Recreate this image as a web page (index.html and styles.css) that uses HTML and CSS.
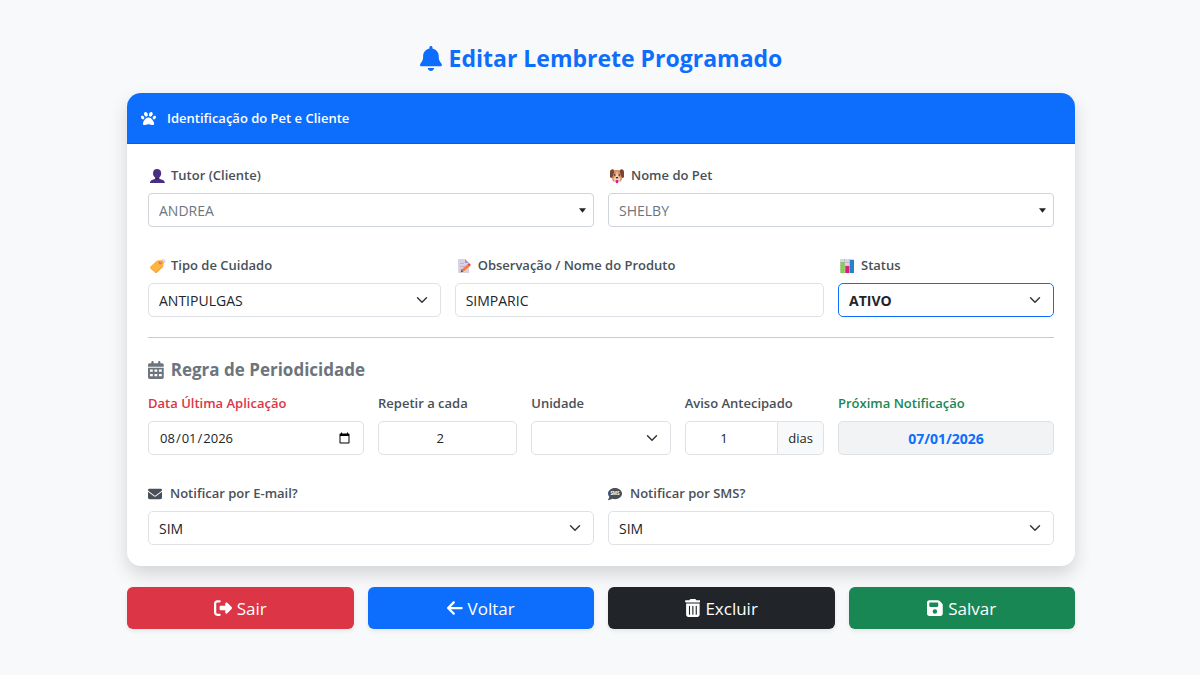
FILE: index.html
```html
<!DOCTYPE html>
<html lang="pt-BR">
<head>
    <meta charset="UTF-8">
    <meta name="viewport" content="width=device-width, initial-scale=1.0">
    <title>Editar Lembrete Programado</title>
    <link rel="stylesheet" href="styles.css">
</head>
<body>
    <main class="container">
        <h1 class="titulo">
            <svg class="icon" viewBox="0 0 448 512" aria-hidden="true"><path d="M224 0c-17.7 0-32 14.3-32 32V51.2C119 66 64 130.6 64 208v18.8c0 47-17.3 92.4-48.5 127.6l-7.4 8.3c-8.4 9.4-10.4 22.9-5.3 34.4S19.4 416 32 416H416c12.6 0 24-7.4 29.2-18.9s3.1-25-5.3-34.4l-7.4-8.3C401.3 319.2 384 273.9 384 226.8V208c0-77.4-55-142-128-156.8V32c0-17.7-14.3-32-32-32zm45.3 493.3c12-12 18.7-28.3 18.7-45.3H224 160c0 17 6.7 33.3 18.7 45.3s28.3 18.7 45.3 18.7s33.3-6.7 45.3-18.7z"/></svg>
            Editar Lembrete Programado
        </h1>

        <form id="form-lembrete">
            <div class="card">
                <div class="card-header">
                    <svg class="icon" viewBox="0 0 512 512" aria-hidden="true"><path d="M226.5 92.9c14.3 42.9-.3 86.2-32.6 96.8s-70.1-15.6-84.4-58.5s.3-86.2 32.6-96.8s70.1 15.6 84.4 58.5zM100.4 198.6c18.9 32.4 14.3 70.1-10.2 84.1s-59.7-.9-78.5-33.3S-2.7 179.3 21.8 165.3s59.7 .9 78.5 33.3zM69.2 401.2C121.6 259.9 214.7 224 256 224s134.4 35.9 186.8 177.2c3.6 9.7 5.2 20.1 5.2 30.5v1.6c0 25.8-20.9 46.7-46.7 46.7c-11.5 0-22.9-1.4-34-4.2l-88-22c-15.3-3.8-31.3-3.8-46.6 0l-88 22c-11.1 2.8-22.5 4.2-34 4.2C84.9 480 64 459.1 64 433.3v-1.6c0-10.4 1.6-20.8 5.2-30.5zM421.8 282.7c-24.5-14-29.1-51.7-10.2-84.1s54-47.3 78.5-33.3s29.1 51.7 10.2 84.1s-54 47.3-78.5 33.3zM310.1 189.7c-32.3-10.6-46.9-53.9-32.6-96.8s52.1-69.1 84.4-58.5s46.9 53.9 32.6 96.8s-52.1 69.1-84.4 58.5z"/></svg>
                    Identificação do Pet e Cliente
                </div>

                <div class="card-body">
                    <div class="row">
                        <div class="col-6">
                            <label class="form-label" for="tutor">
                                <svg class="emoji" viewBox="0 0 18 16" aria-hidden="true"><path fill="#4b2d83" d="M9 1c2.800 0 4.200 1.800 4.200 4.200 0 1.900-.8 3.500-2 4.300v1.300l3.600 1.100c1.300.5 2 1.500 2 3.100H2c0-1.600.6-2.600 2-3.100l3.200-1.100V9.500c-1.400-.8-2.200-2.400-2.200-4.300C5 2.800 6.300 1 9 1z"/><path fill="#35205f" d="M7.200 9.500c1.200.8 2.700.8 4 0v1.300c-1 .9-2.800.9-4 0z"/></svg>
                                Tutor (Cliente)
                            </label>
                            <select id="tutor" class="form-select busca">
                                <option>ANDREA</option>
                            </select>
                        </div>
                        <div class="col-6">
                            <label class="form-label" for="pet">
                                <svg class="emoji" viewBox="0 0 18 16" aria-hidden="true"><path fill="#d6956b" d="M5 2h8l2 6-2 5.500H5L3 8z"/><path fill="#7d4533" d="M5.500 1.500C3.500 1 2 2 2 4v4.500c0 1.500 1.500 2 2.500.5L6.300 4zM12.500 1.500c2-.5 3.500.5 3.500 2.500v4.500c0 1.500-1.500 2-2.500.5L11.700 4z"/><path fill="#f2d3b6" d="M9 3l1.200 5 2.300 2.500-1 3h-5l-1-3L7.800 8z"/><circle cx="6.600" cy="7" r=".8" fill="#3c2420"/><circle cx="11.400" cy="7" r=".8" fill="#3c2420"/><path fill="#3c2420" d="M7.500 9h3L9 11z"/><path fill="#e0208b" d="M7.700 12h2.600v2a1.300 1.300 0 0 1-2.600 0z"/></svg>
                                Nome do Pet
                            </label>
                            <select id="pet" class="form-select busca">
                                <option>SHELBY</option>
                            </select>
                        </div>
                    </div>

                    <div class="row">
                        <div class="col-4">
                            <label class="form-label" for="tipo">
                                <svg class="emoji" viewBox="0 0 18 16" aria-hidden="true"><path fill="#fdb63c" d="M9 2.500l5.500-.5 1.500 2-.8 4.500-6.500 6a1 1 0 0 1-1.400 0L2.400 10a1 1 0 0 1 0-1.400z"/><path fill="#f59a32" d="M2.200 9.500l5.200 4.700 7.800-6.500-.2 1.300-6.500 5.700a1 1 0 0 1-1.300 0L2.400 10.500z"/><circle cx="12.300" cy="4.800" r="1.700" fill="#ec6a77"/><path fill="none" stroke="#c9c4d6" d="M12.300 4.500c.7-3.300 4.700-3.500 4.700-1.300 0 1-1 2-2.300 2.200"/></svg>
                                Tipo de Cuidado
                            </label>
                            <select id="tipo" class="form-select">
                                <option>ANTIPULGAS</option>
                            </select>
                        </div>
                        <div class="col-5">
                            <label class="form-label" for="produto">
                                <svg class="emoji" viewBox="0 0 18 16" aria-hidden="true"><path fill="#d9d2e3" d="M3 1h7l4 4v10H3z"/><path fill="#a79bb8" d="M10 1l4 4h-4z"/><path stroke="#bdb4ca" d="M5 5.500h4M5 8.500h5M5 11.500h2"/><path fill="#fb7a36" d="M6.500 11.500l6-5 2 2-6 5z"/><path fill="#ef3f58" d="M12.500 6.500l1-1c1-.6 2.600 1 2 2l-1 1z"/><path fill="#6d4d50" d="M6.500 11.500L5.600 14.200l2.900-.7z"/></svg>
                                Observação / Nome do Produto
                            </label>
                            <input type="text" id="produto" class="form-control" value="SIMPARIC">
                        </div>
                        <div class="col-3">
                            <label class="form-label" for="status">
                                <svg class="emoji" viewBox="0 0 18 16" aria-hidden="true"><path fill="#dcd3e6" d="M2 1h14v14H2z"/><path stroke="#b5a9c4" stroke-width=".6" d="M2 4.500h14M2 8h14M2 11.500h14M6.500 1v14M11.500 1v14"/><path fill="#84cf4b" d="M2.500 4h4v11h-4z"/><path fill="#d8226f" d="M7.300 8h4v7h-4z"/><path fill="#2384c9" d="M12 2h4v13h-4z"/></svg>
                                Status
                            </label>
                            <select id="status" class="form-select status">
                                <option>ATIVO</option>
                            </select>
                        </div>
                    </div>

                    <hr>

                    <h2 class="subtitulo">
                        <svg class="icon" viewBox="0 0 448 512" aria-hidden="true"><path fill-rule="evenodd" d="M128 0c17.700 0 32 14.300 32 32V64H288V32c0-17.700 14.300-32 32-32s32 14.300 32 32V64h48c26.500 0 48 21.500 48 48v48H0V112C0 85.500 21.500 64 48 64H96V32c0-17.700 14.300-32 32-32zM0 192H448V464c0 26.500-21.500 48-48 48H48c-26.500 0-48-21.500-48-48zM56 240v64h80v-64zm128 0v64h80v-64zm128 0v64h80v-64zM56 368v64h80v-64zm128 0v64h80v-64zm128 0v64h80v-64z"/></svg>
                        Regra de Periodicidade
                    </h2>

                    <div class="row">
                        <div class="col-3">
                            <label class="form-label text-danger" for="ultima">Data Última Aplicação</label>
                            <input type="date" id="ultima" class="form-control" value="2026-08-01">
                        </div>
                        <div class="col-2">
                            <label class="form-label" for="repetir">Repetir a cada</label>
                            <input type="number" id="repetir" class="form-control text-center" value="2">
                        </div>
                        <div class="col-2">
                            <label class="form-label" for="unidade">Unidade</label>
                            <select id="unidade" class="form-select">
                                <option value=""></option>
                            </select>
                        </div>
                        <div class="col-2">
                            <label class="form-label" for="aviso">Aviso Antecipado</label>
                            <div class="input-group">
                                <input type="number" id="aviso" class="form-control text-center" value="1">
                                <span class="input-group-text">dias</span>
                            </div>
                        </div>
                        <div class="col-3">
                            <label class="form-label text-success" for="proxima">Próxima Notificação</label>
                            <input type="text" id="proxima" class="form-control text-center proxima" value="07/01/2026" readonly>
                        </div>
                    </div>

                    <div class="row">
                        <div class="col-6">
                            <label class="form-label com-icone" for="email">
                                <svg class="icon" viewBox="0 0 512 512" aria-hidden="true"><path d="M48 64C21.500 64 0 85.500 0 112c0 15.100 7.100 29.300 19.200 38.400L236.800 313.600c11.400 8.500 27 8.500 38.400 0L492.800 150.400c12.100-9.100 19.200-23.300 19.200-38.400c0-26.500-21.500-48-48-48H48zM0 176V384c0 35.300 28.700 64 64 64H448c35.300 0 64-28.700 64-64V176L294.400 339.200c-22.800 17.100-54 17.100-76.800 0L0 176z"/></svg>
                                Notificar por E-mail?
                            </label>
                            <select id="email" class="form-select">
                                <option>SIM</option>
                                <option>NÃO</option>
                            </select>
                        </div>
                        <div class="col-6">
                            <label class="form-label com-icone" for="sms">
                                <svg class="icon" viewBox="0 0 512 512" aria-hidden="true"><path d="M256 448c141.400 0 256-93.100 256-208S397.400 32 256 32S0 125.100 0 240c0 45.100 17.700 86.800 47.700 120.900c-1.900 24.500-11.400 46.300-21.400 62.900c-5.500 9.200-11.100 16.600-15.200 21.600c-6 7.300-11.100 12.200-11.100 18.600c0 9 7 16 16 16c28.700 0 57.600-8.900 81.600-19.300c22.900-10 42.400-21.900 54.300-30.600c31.800 11.500 67 17.900 104.100 17.900z"/><text class="sms-texto" x="256" y="298" text-anchor="middle">SMS</text></svg>
                                Notificar por SMS?
                            </label>
                            <select id="sms" class="form-select">
                                <option>SIM</option>
                                <option>NÃO</option>
                            </select>
                        </div>
                    </div>
                </div>
            </div>

            <div class="acoes">
                <button type="button" class="btn btn-danger">
                    <svg class="icon" viewBox="0 0 512 512" aria-hidden="true"><path d="M377.900 105.900L500.700 228.700c7.200 7.200 11.300 17.100 11.300 27.300s-4.100 20.100-11.300 27.300L377.900 406.100c-6.400 6.400-15 9.900-24 9.900c-18.700 0-33.900-15.200-33.900-33.900l0-62.100-128 0c-17.700 0-32-14.300-32-32l0-64c0-17.700 14.300-32 32-32l128 0 0-62.100c0-18.700 15.200-33.900 33.900-33.900c9 0 17.600 3.600 24 9.900zM160 96L96 96c-17.700 0-32 14.300-32 32l0 256c0 17.700 14.300 32 32 32l64 0c17.700 0 32 14.300 32 32s-14.300 32-32 32l-64 0c-53 0-96-43-96-96L0 128C0 75 43 32 96 32l64 0c17.700 0 32 14.300 32 32s-14.300 32-32 32z"/></svg>
                    Sair
                </button>
                <button type="button" class="btn btn-primary">
                    <svg class="icon" viewBox="0 0 448 512" aria-hidden="true"><path d="M9.400 233.400c-12.500 12.500-12.500 32.800 0 45.300l160 160c12.500 12.500 32.800 12.500 45.300 0s12.500-32.800 0-45.300L109.200 288 416 288c17.700 0 32-14.300 32-32s-14.300-32-32-32l-306.700 0L214.600 118.600c12.500-12.500 12.500-32.800 0-45.300s-32.800-12.500-45.300 0l-160 160z"/></svg>
                    Voltar
                </button>
                <button type="button" class="btn btn-dark">
                    <svg class="icon" viewBox="0 0 448 512" aria-hidden="true"><path fill-rule="evenodd" d="M135.200 17.700C140.600 6.800 151.700 0 163.800 0H284.200c12.100 0 23.200 6.800 28.600 17.700L320 32h96c17.700 0 32 14.300 32 32s-14.300 32-32 32H32C14.300 96 0 81.700 0 64S14.300 32 32 32h96zM32 128H416V448c0 35.300-28.700 64-64 64H96c-35.300 0-64-28.700-64-64zM128 192c-8.800 0-16 7.200-16 16V432c0 8.800 7.200 16 16 16s16-7.200 16-16V208c0-8.800-7.200-16-16-16zm96 0c-8.800 0-16 7.200-16 16V432c0 8.800 7.200 16 16 16s16-7.200 16-16V208c0-8.800-7.200-16-16-16zm96 0c-8.800 0-16 7.200-16 16V432c0 8.800 7.200 16 16 16s16-7.200 16-16V208c0-8.800-7.200-16-16-16z"/></svg>
                    Excluir
                </button>
                <button type="submit" class="btn btn-success">
                    <svg class="icon" viewBox="0 0 448 512" aria-hidden="true"><path fill-rule="evenodd" d="M64 32C28.700 32 0 60.700 0 96V416c0 35.300 28.700 64 64 64H384c35.300 0 64-28.700 64-64V173.300c0-17-6.700-33.300-18.700-45.300L352 50.700C340 38.700 323.700 32 306.700 32H64zm0 96c0-17.700 14.300-32 32-32H288c17.700 0 32 14.300 32 32v64c0 17.700-14.300 32-32 32H96c-17.700 0-32-14.300-32-32V128zM224 288a64 64 0 1 1 0 128 64 64 0 1 1 0-128z"/></svg>
                    Salvar
                </button>
            </div>
        </form>
    </main>
</body>
</html>
```

FILE: styles.css
```css
* {
    box-sizing: border-box;
}
body {
    margin: 0;
    background: #f8f9fa;
    color: #212529;
    font-family: "Segoe UI", "Open Sans", "Noto Sans", sans-serif;
    font-size: 14px;
    line-height: 21px;
}
.container {
    max-width: 976px;
    margin: 0 auto;
    padding: 43px 13px 43px 15px;
}
.icon {
    flex: none;
    height: 14px;
    fill: currentColor;
}

/* Títulos */
.titulo {
    display: flex;
    justify-content: center;
    align-items: center;
    gap: 7px;
    margin: 0 0 20px;
    color: #0d6efd;
    font-size: 23px;
    font-weight: 700;
    line-height: 30px;
}
.titulo .icon {
    height: 25px;
}
.subtitulo {
    display: flex;
    align-items: center;
    gap: 7px;
    margin: 0 0 11px;
    color: #6c757d;
    font-size: 17px;
    font-weight: 700;
    line-height: 24px;
}
.subtitulo .icon {
    height: 18px;
}

/* Card */
.card {
    overflow: hidden;
    background: #fff;
    border-radius: 14px;
    box-shadow: 0 8px 18px rgba(0,0,0,0.15);
}
.card-header {
    display: flex;
    align-items: center;
    gap: 11px;
    padding: 15px 14px 14px;
    background: #0d6efd;
    border-bottom: 1px solid #0b5ed7;
    color: #fff;
    font-size: 13px;
    font-weight: 600;
}
.card-header .icon {
    height: 15px;
}
.card-body {
    padding: 21px;
}
hr {
    margin: 20px 0;
    border: 0;
    border-top: 1px solid #c8cacc;
}

/* Grid de 12 colunas */
.row {
    display: grid;
    grid-template-columns: repeat(12, minmax(0, 1fr));
    gap: 14px;
}
.row + .row {
    margin-top: 28px;
}
.col-2 { grid-column: span 2; }
.col-3 { grid-column: span 3; }
.col-4 { grid-column: span 4; }
.col-5 { grid-column: span 5; }
.col-6 { grid-column: span 6; }

/* Formulário */
.form-label {
    display: flex;
    align-items: center;
    gap: 5px;
    margin-bottom: 7px;
    color: #495057;
    font-size: 13px;
    font-weight: 600;
}
.com-icone {
    gap: 8px;
}
.emoji {
    flex: none;
    width: 18px;
    height: 16px;
}
.sms-texto {
    fill: #fff;
    font-size: 165px;
    font-weight: 700;
}
.form-control,
.form-select {
    display: block;
    width: 100%;
    height: 34px;
    margin: 0;
    padding: 0 10px;
    background-color: #fff;
    border: 1px solid #dee2e6;
    border-radius: 5px;
    color: #212529;
    font: inherit;
}
.form-select {
    appearance: none;
    padding-right: 32px;
    background-image: url("data:image/svg+xml,%3csvg xmlns='http://www.w3.org/2000/svg' viewBox='0 0 16 16'%3e%3cpath fill='none' stroke='%23343a40' stroke-linecap='round' stroke-linejoin='round' stroke-width='2' d='m2 5 6 6 6-6'/%3e%3c/svg%3e");
    background-repeat: no-repeat;
    background-position: right 12px center;
    background-size: 12px;
}
.busca {
    background-image: url("data:image/svg+xml,%3csvg xmlns='http://www.w3.org/2000/svg' viewBox='0 0 8 5'%3e%3cpath fill='%23212529' d='M0 0h8L4 5z'/%3e%3c/svg%3e");
    background-position: right 7px center;
    background-size: 7px 5px;
    border-color: #ced4da;
    border-radius: 4px;
    color: #6c757d;
}
.status {
    border-color: #0d6efd;
    font-weight: 700;
}
.text-center {
    text-align: center;
}
.text-danger { color: #dc3545; }
.text-success { color: #198754; }
input[type="date"],
input[type="number"] {
    font-size: 13px;
}
.proxima {
    background-color: #f1f3f5;
    color: #0d6efd;
    font-weight: 700;
}
.input-group {
    display: flex;
}
.input-group .form-control {
    flex: 1;
    min-width: 0;
    border-radius: 5px 0 0 5px;
}
.input-group-text {
    display: flex;
    align-items: center;
    padding: 0 10px;
    background: #f8f9fa;
    border: 1px solid #dee2e6;
    border-left: 0;
    border-radius: 0 5px 5px 0;
    font-size: 13px;
}

/* Botões */
.acoes {
    display: grid;
    grid-template-columns: repeat(4, 1fr);
    gap: 14px;
    margin-top: 21px;
}
.btn {
    display: flex;
    justify-content: center;
    align-items: center;
    gap: 5px;
    height: 42px;
    padding: 0;
    border: 0;
    border-radius: 6px;
    box-shadow: 0 2px 4px rgba(0,0,0,0.08);
    color: #fff;
    font: inherit;
    font-size: 17px;
    cursor: pointer;
}
.btn .icon {
    height: 18px;
}
.btn-danger { background: #dc3545; }
.btn-primary { background: #0d6efd; }
.btn-dark { background: #212529; }
.btn-success { background: #198754; }
```
